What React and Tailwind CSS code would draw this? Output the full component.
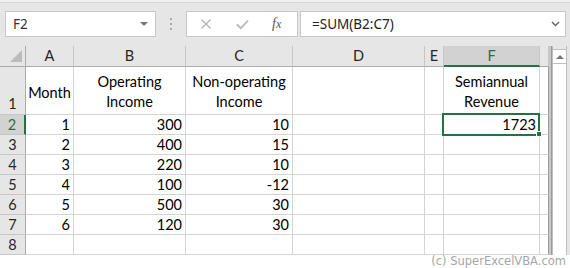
import React from "react";

const cellFont = { fontFamily: "Lato, 'Open Sans', sans-serif" };

const rows = [
  ["1", "300", "10"],
  ["2", "400", "15"],
  ["3", "220", "10"],
  ["4", "100", "-12"],
  ["5", "500", "30"],
  ["6", "120", "30"],
  ["", "", ""],
];

const colHeads = ["A", "B", "C", "D", "E", "F", ""];

function HeadCell({ label }) {
  const sel = label === "F";
  return (
    <div
      className={
        "h-[21px] flex items-center justify-center text-[14.5px] border-r " +
        (sel
          ? "bg-[#d2d2d2] text-[#217346] border-[#c6c6c6] border-b-2 border-b-[#217346]"
          : "bg-[#e6e6e6] text-[#262626] border-[#c6c6c6] border-b border-b-[#ababab]")
      }
    >
      {label}
    </div>
  );
}

function RowHead({ n, tall }) {
  const sel = n === 2;
  return (
    <div
      className={
        "flex justify-center text-[14.5px] border-b border-[#c6c6c6] " +
        (tall ? "h-[48px] items-end leading-[18px] pb-[1px] " : "h-[20px] items-center ") +
        (sel
          ? "bg-[#d2d2d2] text-[#217346] border-r-2 border-r-[#217346]"
          : "bg-[#e6e6e6] text-[#262626] border-r border-r-[#ababab]")
      }
    >
      {n}
    </div>
  );
}

function Cell({ children, right, last }) {
  return (
    <div
      className={
        "h-[20px] flex items-center border-b border-r border-[#d4d4d4] text-[14.5px] text-black px-[3px] " +
        (right ? "justify-end " : "") +
        (last ? "border-r-[#9a9a9a]" : "")
      }
    >
      {children}
    </div>
  );
}

function TitleCell({ lines, last, center }) {
  return (
    <div
      className={
        "h-[48px] flex flex-col items-center border-b border-r border-[#d4d4d4] text-[14.5px] leading-[20px] text-black " +
        (center ? "justify-center pt-[4px] " : "justify-end pb-[2px] ") +
        (last ? "border-r-[#9a9a9a]" : "")
      }
    >
      {lines.map((l) => (
        <span key={l}>{l}</span>
      ))}
    </div>
  );
}

export default function App() {
  return (
    <div className="w-[570px] h-[268px] bg-white overflow-hidden relative" style={cellFont}>
      {/* formula bar */}
      <div className="h-[46px] bg-[#e6e6e6]">
        <div className="h-[3px] bg-[#f0f0f0] border-b border-[#d6d6d6]" />
        <div className="flex items-center pt-[8px]" style={{ fontFamily: "'Noto Sans', sans-serif" }}>
          <div className="ml-[5px] w-[151px] h-[26px] bg-white border border-[#c6c6c6] flex items-center justify-between pl-[7px] pr-[7px] text-[13.5px] text-[#333]">
            <span>F2</span>
            <span className="w-0 h-0 border-l-[4px] border-r-[4px] border-t-[4px] border-l-transparent border-r-transparent border-t-[#777]" />
          </div>
          <div className="ml-[14px] flex flex-col gap-[3px]">
            <span className="w-[2px] h-[2px] bg-[#aaa]" />
            <span className="w-[2px] h-[2px] bg-[#aaa]" />
            <span className="w-[2px] h-[2px] bg-[#aaa]" />
          </div>
          <div className="ml-[14px] w-[112px] h-[26px] bg-white border border-[#c6c6c6] flex items-center">
            <svg className="ml-[13px]" width="12" height="12" viewBox="0 0 12 12">
              <path d="M1.5 1.5 L10.5 10.5 M10.5 1.5 L1.5 10.5" stroke="#b4b4b4" strokeWidth="1.4" fill="none" />
            </svg>
            <svg className="ml-[24px]" width="13" height="11" viewBox="0 0 13 11">
              <path d="M1 5.5 L4.8 9.3 L12 1.5" stroke="#b4b4b4" strokeWidth="1.8" fill="none" />
            </svg>
            <span
              className="ml-[23px] text-[14px] italic text-[#555] leading-none"
              style={{ fontFamily: "'Liberation Serif', serif" }}
            >
              f<span className="text-[12px]">x</span>
            </span>
          </div>
          <div className="ml-[2px] w-[266px] h-[26px] bg-white border border-[#c6c6c6] flex items-center justify-between pl-[11px] pr-[5px] text-[13.5px] text-[#222]">
            <span>=SUM(B2:C7)</span>
            <svg width="9" height="6" viewBox="0 0 9 6">
              <path d="M1 1 L4.5 4.5 L8 1" stroke="#666" strokeWidth="1.5" fill="none" />
            </svg>
          </div>
        </div>
      </div>

      {/* sheet */}
      <div className="flex">
        <div className="grid grid-cols-[26px_48px_112px_107px_132px_19px_96px_9px]">
          <div className="h-[21px] bg-[#e6e6e6] border-r border-b border-[#ababab]">
            <svg width="25" height="20" viewBox="0 0 25 20">
              <polygon points="10,16 22,16 22,4" fill="#bcbcbc" />
            </svg>
          </div>
          {colHeads.map((c, i) => (
            <HeadCell key={i} label={c} />
          ))}

          <RowHead n={1} tall />
          <TitleCell lines={["Month"]} center />
          <TitleCell lines={["Operating", "Income"]} />
          <TitleCell lines={["Non-operating", "Income"]} />
          <TitleCell lines={[]} />
          <TitleCell lines={[]} />
          <TitleCell lines={["Semiannual", "Revenue"]} />
          <TitleCell lines={[]} last />

          {rows.map((r, i) => (
            <React.Fragment key={i}>
              <RowHead n={i + 2} />
              <Cell right>{r[0]}</Cell>
              <Cell right>{r[1]}</Cell>
              <Cell right>{r[2]}</Cell>
              <Cell />
              <Cell />
              {i === 0 ? (
                <div className="h-[20px] relative border-b border-r border-[#d4d4d4] flex items-center justify-end px-[3px] text-[14.5px] text-black">
                  1723
                  <div className="absolute -left-[2px] -top-[2px] w-[98px] h-[23px] border-2 border-[#217346]" />
                  <div className="absolute -right-[3px] -bottom-[3px] w-[6px] h-[6px] bg-[#217346] border border-white" />
                </div>
              ) : (
                <Cell />
              )}
              <Cell last />
            </React.Fragment>
          ))}
        </div>

        {/* vertical scrollbar */}
        <div className="w-[21px] h-[209px] flex">
          <div className="w-[3px] bg-[#c8c8c8] border-r border-[#9a9a9a]" />
          <div className="w-[15px] bg-white border-x border-[#bdbdbd] flex flex-col">
            <div className="h-[3px] bg-[#e6e6e6]" />
            <div className="h-[15px] border-y border-[#bdbdbd] flex items-center justify-center">
              <span className="w-0 h-0 border-l-[4px] border-r-[4px] border-b-[4px] border-l-transparent border-r-transparent border-b-[#777]" />
            </div>
          </div>
          <div className="w-[3px] bg-[#e6e6e6]" />
        </div>
      </div>

      <div
        className="absolute right-[4px] bottom-[0px] text-[11.5px] leading-[14px] text-[#a6a6a6]"
        style={{ fontFamily: "'DejaVu Sans', sans-serif" }}
      >
        (c) SuperExcelVBA.com
      </div>
    </div>
  );
}
